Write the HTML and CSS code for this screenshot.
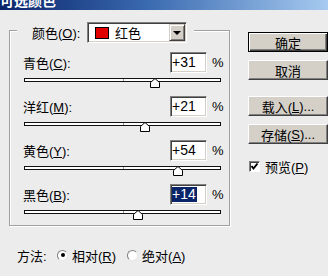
FILE: index.html
```html
<!DOCTYPE html>
<html lang="zh-CN">
<head>
<meta charset="utf-8">
<title>可选颜色</title>
<link rel="stylesheet" href="styles.css">
</head>
<body>
<div class="titlebar"><div class="title">可选颜色</div></div>
<div class="main">
  <div class="group">
    <div class="legend">
      <span class="legend-label">颜色(<u>O</u>):</span>
      <div class="select">
        <span class="swatch"></span>
        <span class="select-text">红色</span>
        <span class="arrow-btn"><span class="arrow"></span></span>
      </div>
    </div>
    <div class="rows">
      <div class="row-head">
        <span class="lbl">青色(<u>C</u>):</span>
        <span class="num">+31</span>
        <span class="pct">%</span>
      </div>
      <div class="slider" style="--v:31">
        <div class="track"></div>
        <svg class="thumb" width="10" height="10" viewBox="0 0 10 10"><polygon points="0.5,9.5 0.5,4.5 5,0.5 9.5,4.5 9.5,9.5" fill="#fff" stroke="#000" stroke-width="1"/></svg>
      </div>
      <div class="row-head">
        <span class="lbl">洋红(<u>M</u>):</span>
        <span class="num">+21</span>
        <span class="pct">%</span>
      </div>
      <div class="slider" style="--v:21">
        <div class="track"></div>
        <svg class="thumb" width="10" height="10" viewBox="0 0 10 10"><polygon points="0.5,9.5 0.5,4.5 5,0.5 9.5,4.5 9.5,9.5" fill="#fff" stroke="#000" stroke-width="1"/></svg>
      </div>
      <div class="row-head">
        <span class="lbl">黄色(<u>Y</u>):</span>
        <span class="num">+54</span>
        <span class="pct">%</span>
      </div>
      <div class="slider" style="--v:54">
        <div class="track"></div>
        <svg class="thumb" width="10" height="10" viewBox="0 0 10 10"><polygon points="0.5,9.5 0.5,4.5 5,0.5 9.5,4.5 9.5,9.5" fill="#fff" stroke="#000" stroke-width="1"/></svg>
      </div>
      <div class="row-head">
        <span class="lbl">黑色(<u>B</u>):</span>
        <span class="num"><span class="sel">+14</span></span>
        <span class="pct">%</span>
      </div>
      <div class="slider" style="--v:14">
        <div class="track"></div>
        <svg class="thumb" width="10" height="10" viewBox="0 0 10 10"><polygon points="0.5,9.5 0.5,4.5 5,0.5 9.5,4.5 9.5,9.5" fill="#fff" stroke="#000" stroke-width="1"/></svg>
      </div>
    </div>
  </div>
  <div class="side">
    <div class="btn default">确定</div>
    <div class="btn gap-s">取消</div>
    <div class="btn gap-l">载入(<u>L</u>)...</div>
    <div class="btn gap-s">存储(<u>S</u>)...</div>
    <div class="check-row">
      <span class="checkbox"><svg width="9" height="9" viewBox="0 0 9 9"><path d="M1.5 4 L3.5 6.5 L7.5 1.5" fill="none" stroke="#000" stroke-width="2"/></svg></span>
      <span>预览(<u>P</u>)</span>
    </div>
  </div>
</div>
<div class="method">
  <span class="method-label">方法:</span>
  <span class="radio on"></span>
  <span class="radio-text">相对(<u>R</u>)</span>
  <span class="radio"></span>
  <span class="radio-text">绝对(<u>A</u>)</span>
</div>
</body>
</html>
```
FILE: styles.css
```css
html, body {
  margin: 0;
  padding: 0;
}
body {
  width: 328px;
  height: 276px;
  overflow: hidden;
  background: #ececec;
  font-family: "Liberation Sans", "Noto Sans CJK SC", sans-serif;
  font-size: 13px;
  color: #000;
}
u { text-decoration: underline; text-underline-offset: 1px; }

.titlebar {
  height: 10px;
  overflow: hidden;
  background: linear-gradient(90deg, #0a246a 0%, #3a6ab0 45%, #a6caf0 100%);
}
.title {
  color: #fff;
  font-weight: bold;
  font-size: 14px;
  line-height: 14px;
  margin-top: -6px;
  white-space: nowrap;
}

.main {
  display: flex;
  align-items: flex-start;
}
.group {
  margin: 20px 0 0 9px;
  width: 227px;
  height: 196px;
  box-sizing: border-box;
  border: 1px solid #a0a0a0;
  box-shadow: inset 1px 1px 0 #fff, 1px 1px 0 #fff;
}
.legend {
  display: flex;
  align-items: center;
  width: fit-content;
  height: 21px;
  margin: -9px 0 0 7px;
  padding: 0 7px 0 15px;
  background: #ececec;
}
.legend-label {
  width: 55px;
  white-space: nowrap;
}
.select {
  width: 100px;
  height: 21px;
  box-sizing: border-box;
  display: flex;
  align-items: center;
  background: #fff;
  border: 1px solid;
  border-color: #808080 #fff #fff #808080;
  box-shadow: inset 1px 1px 0 #404040, inset -1px -1px 0 #d4d0c8;
}
.swatch {
  width: 14px;
  height: 12px;
  box-sizing: border-box;
  margin-left: 7px;
  background: #e00000;
  border: 1px solid #000;
}
.select-text {
  margin-left: 6px;
}
.arrow-btn {
  margin-left: auto;
  margin-right: 1px;
  width: 16px;
  height: 17px;
  box-sizing: border-box;
  background: #d4d0c8;
  border: 1px solid;
  border-color: #d4d0c8 #404040 #404040 #d4d0c8;
  box-shadow: inset 1px 1px 0 #fff, inset -1px -1px 0 #808080;
  display: flex;
  align-items: center;
  justify-content: center;
}
.arrow {
  width: 0;
  height: 0;
  border-left: 4px solid transparent;
  border-right: 4px solid transparent;
  border-top: 4px solid #000;
}

.rows {
  margin-top: 9px;
  padding-left: 13px;
}
.row-head {
  display: flex;
  align-items: center;
  height: 21px;
}
.lbl {
  width: 147px;
  white-space: nowrap;
}
.num {
  width: 37px;
  height: 21px;
  box-sizing: border-box;
  background: #fff;
  border: 1px solid;
  border-color: #808080 #fff #fff #808080;
  box-shadow: inset 1px 1px 0 #404040, inset -1px -1px 0 #d4d0c8;
  font-size: 14px;
  line-height: 19px;
  padding-left: 1px;
}
.sel {
  display: inline-block;
  background: #0a246a;
  color: #fff;
  line-height: 15px;
  padding-right: 1px;
}
.pct {
  margin-left: 5px;
  font-size: 13px;
}
.slider {
  position: relative;
  width: 197px;
  height: 10px;
  margin: 5px 0 8px 1px;
}
.track {
  position: relative;
  margin-top: 4px;
  height: 4px;
  box-sizing: border-box;
  border: 1px solid #111;
  background: #fff;
}
.track::after {
  content: "";
  position: absolute;
  left: 98px;
  top: 0;
  width: 1px;
  height: 2px;
  background: #9a9a9a;
}
.thumb {
  position: absolute;
  top: 0;
  left: calc(50% - 4px + var(--v) * 1px);
  display: block;
}

.side {
  margin: 22px 0 0 18px;
  display: flex;
  flex-direction: column;
}
.btn {
  width: 80px;
  height: 20px;
  box-sizing: border-box;
  background: #d4d0c8;
  border: 1px solid;
  border-color: #fff #404040 #404040 #fff;
  box-shadow: inset -1px -1px 0 #808080;
  display: flex;
  align-items: center;
  justify-content: center;
  white-space: nowrap;
}
.btn.default {
  border-color: #000;
  box-shadow: inset 1px 1px 0 #fff, inset -1px -1px 0 #404040, inset -2px -2px 0 #808080;
}
.gap-s { margin-top: 8px; }
.gap-l { margin-top: 16px; }
.check-row {
  display: flex;
  align-items: center;
  margin-top: 14px;
  height: 16px;
}
.checkbox {
  width: 11px;
  height: 11px;
  box-sizing: border-box;
  margin-left: 1px;
  margin-right: 5px;
  background: #fff;
  border: 1px solid;
  border-color: #808080 #fff #fff #808080;
  box-shadow: inset 1px 1px 0 #404040;
  display: flex;
  align-items: center;
  justify-content: center;
}
.checkbox svg { display: block; }

.method {
  display: flex;
  align-items: center;
  height: 16px;
  margin-top: 21px;
  padding-left: 17px;
}
.method-label {
  width: 40px;
}
.radio {
  width: 11px;
  height: 11px;
  box-sizing: border-box;
  border-radius: 50%;
  background: #fff;
  border: 1px solid;
  border-color: #808080 #e8e8e8 #e8e8e8 #808080;
  display: flex;
  align-items: center;
  justify-content: center;
}
.radio.on::after {
  content: "";
  width: 4px;
  height: 4px;
  border-radius: 50%;
  background: #000;
}
.radio-text {
  margin-left: 4px;
  margin-right: 11px;
}
```
